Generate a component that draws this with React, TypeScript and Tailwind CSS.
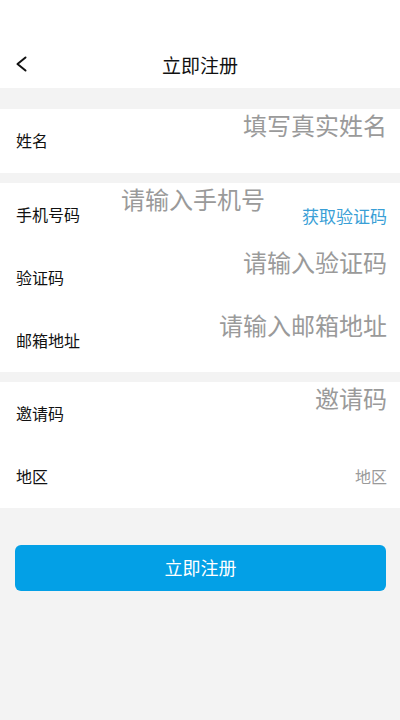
const font = { fontFamily: '"Noto Sans CJK SC", "Noto Sans", sans-serif' }

function Row({
  label,
  placeholder,
  labelWidth,
  tall,
  children,
}: {
  label: string
  placeholder?: string
  labelWidth?: string
  tall?: boolean
  children?: React.ReactNode
}) {
  return (
    <div className={`flex pl-4 pr-[13px] ${tall ? 'h-[64px]' : 'h-[63px]'}`}>
      <div className={`flex shrink-0 items-center pb-[2px] text-[16px] leading-none text-[#111] ${labelWidth ?? ''}`}>
        {label}
      </div>
      {placeholder && (
        <div className={`pt-[4px] text-[24px] leading-none text-[#9a9a9a] ${labelWidth ? '' : 'ml-auto'}`}>
          {placeholder}
        </div>
      )}
      {children}
    </div>
  )
}

export default function App() {
  return (
    <div className="min-h-[720px] w-[400px] bg-[#f3f3f3]" style={font}>
      {/* Header */}
      <div className="bg-white pt-10">
        <div className="relative flex h-12 items-center justify-center">
          <svg className="absolute left-[15px] top-[16px]" width="12" height="16" viewBox="0 0 12 16" fill="none">
            <polyline points="10.5,1.5 2.5,8 10.5,14.5" stroke="#111" strokeWidth="2" strokeLinecap="round" strokeLinejoin="round" />
          </svg>
          <span className="text-[19px] leading-none text-[#111]">立即注册</span>
        </div>
      </div>

      <div className="h-[21px]" />

      <div className="bg-white">
        <Row label="姓名" placeholder="填写真实姓名" tall />
      </div>

      <div className="h-[10px]" />

      <div className="bg-white">
        <Row label="手机号码" placeholder="请输入手机号" labelWidth="w-[105px]">
          <div className="ml-auto flex items-center pt-[1px] text-[17px] leading-none text-[#3a9fd6]">获取验证码</div>
        </Row>
        <Row label="验证码" placeholder="请输入验证码" />
        <Row label="邮箱地址" placeholder="请输入邮箱地址" />
      </div>

      <div className="h-[10px]" />

      <div className="bg-white">
        <Row label="邀请码" placeholder="邀请码" />
        <Row label="地区">
          <div className="ml-auto flex items-center pb-[1px] text-[16px] leading-none text-[#9a9a9a]">地区</div>
        </Row>
      </div>

      <div className="pl-[15px] pr-[14px] pt-[37px]">
        <button className="flex h-[46px] w-full items-center justify-center rounded-[6px] bg-[#03a0e6] pb-[2px] text-[18px] leading-none text-white">
          立即注册
        </button>
      </div>
    </div>
  )
}
